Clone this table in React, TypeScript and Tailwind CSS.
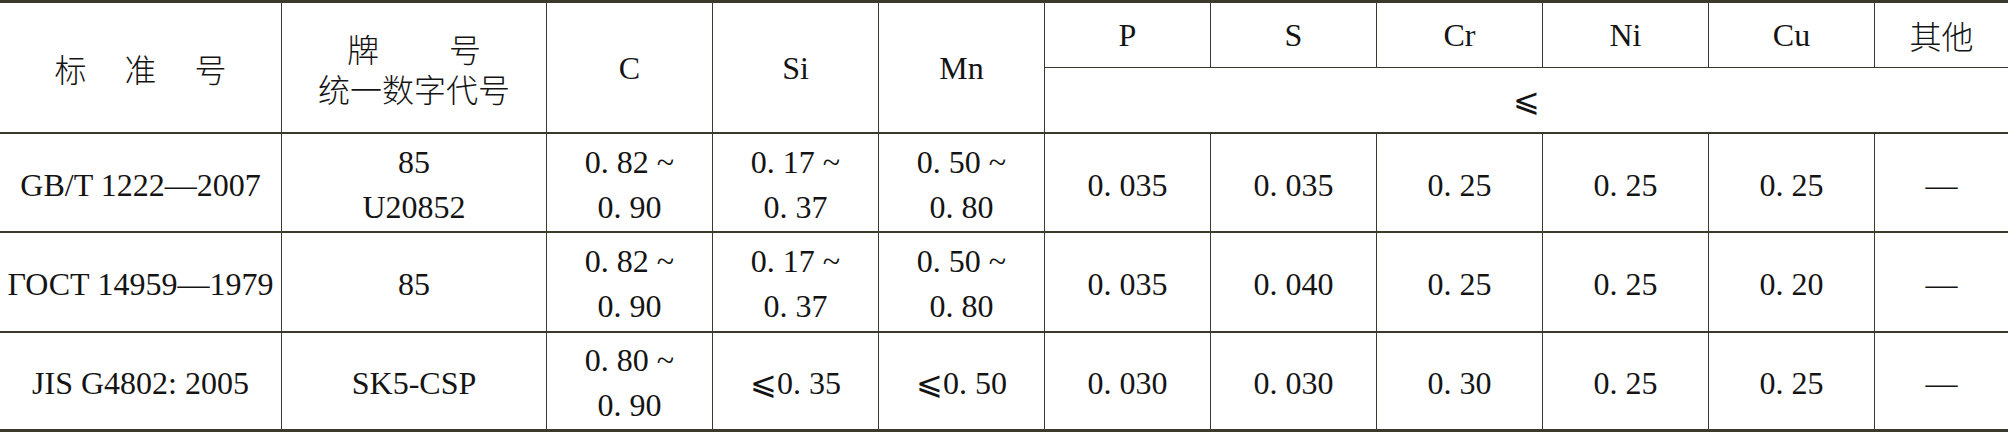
import React from "react";

const line = "border-[#3a392c]";

type Row = {
	std: string;
	grade: string[];
	c: string[];
	si: string[];
	mn: string[];
	p: string;
	s: string;
	cr: string;
	ni: string;
	cu: string;
};

const rows: Row[] = [
	{
		std: "GB/T 1222—2007",
		grade: ["85", "U20852"],
		c: ["0. 82 ~", "0. 90"],
		si: ["0. 17 ~", "0. 37"],
		mn: ["0. 50 ~", "0. 80"],
		p: "0. 035",
		s: "0. 035",
		cr: "0. 25",
		ni: "0. 25",
		cu: "0. 25",
	},
	{
		std: "ГОСТ 14959—1979",
		grade: ["85"],
		c: ["0. 82 ~", "0. 90"],
		si: ["0. 17 ~", "0. 37"],
		mn: ["0. 50 ~", "0. 80"],
		p: "0. 035",
		s: "0. 040",
		cr: "0. 25",
		ni: "0. 25",
		cu: "0. 20",
	},
	{
		std: "JIS G4802: 2005",
		grade: ["SK5-CSP"],
		c: ["0. 80 ~", "0. 90"],
		si: ["⩽0. 35"],
		mn: ["⩽0. 50"],
		p: "0. 030",
		s: "0. 030",
		cr: "0. 30",
		ni: "0. 25",
		cu: "0. 25",
	},
];

function Cell({
	children,
	last,
	bottom,
	className = "",
}: {
	children: React.ReactNode;
	last?: boolean;
	bottom?: "none" | "thin" | "thick";
	className?: string;
}) {
	const b =
		bottom === "none" ? "" : bottom === "thin" ? "border-b" : "border-b-2";
	return (
		<div
			className={`flex flex-col items-center justify-center text-center ${line} ${
				last ? "" : "border-r"
			} ${b} ${className}`}
		>
			{children}
		</div>
	);
}

// latin in serif, chinese falls to the CJK font
const serif =
	"font-['Liberation_Serif','Tinos','Times_New_Roman','DejaVu_Serif','Noto_Sans_CJK_SC',serif]";
const cjk = "font-['Noto_Sans_CJK_SC',sans-serif] font-light";

export default function App() {
	return (
		<div
			className={`w-[2008px] h-[432px] bg-white text-[#141414] text-[32px] ${serif} border-t-[3px] border-b-[3px] ${line} grid grid-cols-[282px_265px_166px_166px_166px_166px_166px_166px_166px_166px_133px] grid-rows-[65px_66px_99px_100px_96px]`}
		>
			{/* header */}
			<Cell className={`row-span-2 leading-none ${cjk}`}>
				<div className="whitespace-pre [word-spacing:31px]">标 准 号</div>
			</Cell>
			<Cell className={`row-span-2 leading-none ${cjk}`}>
				<div className="h-[40px] flex items-center whitespace-pre [word-spacing:63px]">
					牌 号
				</div>
				<div className="h-[40px] flex items-center">统一数字代号</div>
			</Cell>
			<Cell className="row-span-2">C</Cell>
			<Cell className="row-span-2">Si</Cell>
			<Cell className="row-span-2">Mn</Cell>
			<Cell bottom="thin">P</Cell>
			<Cell bottom="thin">S</Cell>
			<Cell bottom="thin">Cr</Cell>
			<Cell bottom="thin">Ni</Cell>
			<Cell bottom="thin">Cu</Cell>
			<Cell bottom="thin" last className={cjk}>
				其他
			</Cell>
			<Cell last className="col-span-6">
				⩽
			</Cell>

			{/* data */}
			{rows.map((r, i) => {
				const bottom = i === rows.length - 1 ? "none" : "thick";
				const two = "leading-[45px] pt-1";
				return (
					<React.Fragment key={r.std}>
						<Cell bottom={bottom} className="pt-1">
							{r.std}
						</Cell>
						<Cell bottom={bottom} className={two}>
							{r.grade.map((g) => (
								<div key={g}>{g}</div>
							))}
						</Cell>
						<Cell bottom={bottom} className={two}>
							{r.c.map((g) => (
								<div key={g}>{g}</div>
							))}
						</Cell>
						<Cell bottom={bottom} className={two}>
							{r.si.map((g) => (
								<div key={g}>{g}</div>
							))}
						</Cell>
						<Cell bottom={bottom} className={two}>
							{r.mn.map((g) => (
								<div key={g}>{g}</div>
							))}
						</Cell>
						<Cell bottom={bottom} className="pt-1">{r.p}</Cell>
						<Cell bottom={bottom} className="pt-1">{r.s}</Cell>
						<Cell bottom={bottom} className="pt-1">{r.cr}</Cell>
						<Cell bottom={bottom} className="pt-1">{r.ni}</Cell>
						<Cell bottom={bottom} className="pt-1">{r.cu}</Cell>
						<Cell bottom={bottom} last className="pt-1">
							—
						</Cell>
					</React.Fragment>
				);
			})}
		</div>
	);
}
